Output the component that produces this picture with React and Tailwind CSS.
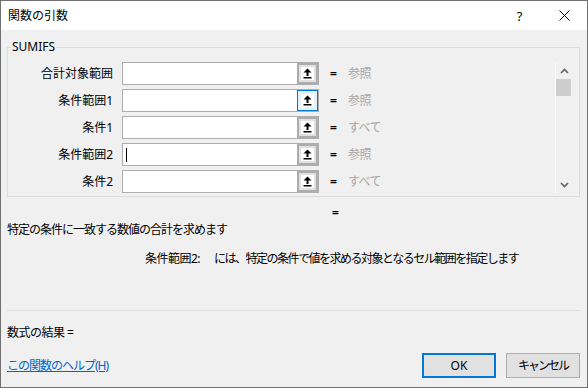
const rows = [
  { label: '合計対象範囲', hint: '参照' },
  { label: '条件範囲1', hint: '参照', focused: true },
  { label: '条件1', hint: 'すべて' },
  { label: '条件範囲2', hint: '参照', caret: true },
  { label: '条件2', hint: 'すべて' },
];

function CollapseIcon() {
  return (
    <svg width="9" height="11" viewBox="0 0 9 11" className="block">
      <polygon points="4.5,0.5 8.5,4.5 0.5,4.5" fill="#000" />
      <rect x="3.5" y="4" width="2" height="4" fill="#000" />
      <rect x="0.5" y="9" width="8" height="1.5" fill="#000" />
    </svg>
  );
}

function RefButton({ focused }) {
  return (
    <div
      className={
        focused
          ? 'w-[21px] h-full flex items-center justify-center border border-[#0078d7] bg-[#e5f1fb]'
          : 'w-[21px] h-full flex items-center justify-center border-2 border-[#adadad] bg-[#e1e1e1]'
      }
    >
      <span className="w-[13px] h-[13px] bg-white flex items-center justify-center">
        <CollapseIcon />
      </span>
    </div>
  );
}

function ArgRow({ label, hint, focused, caret }) {
  return (
    <div className="flex items-center h-[23px]">
      <div className="w-[105px] text-right">{label}</div>
      <div className="ml-[9px] w-[197px] h-full flex border border-[#adadad] bg-white">
        <div className="flex-1 flex items-center pl-[3px]">
          {caret && <span className="w-[1px] h-[14px] bg-black" />}
        </div>
        <RefButton focused={focused} />
      </div>
      <span className="ml-[11px] font-bold">=</span>
      <span className="ml-[11px] text-[#a6a6a6] tracking-[-0.5px]">{hint}</span>
    </div>
  );
}

function Chevron({ down }) {
  return (
    <svg width="9" height="6" viewBox="0 0 9 6">
      <polyline
        points={down ? '1,1 4.5,4.5 8,1' : '1,5 4.5,1.5 8,5'}
        fill="none"
        stroke="#606060"
        strokeWidth="1.6"
      />
    </svg>
  );
}

export default function App() {
  return (
    <div className="w-[588px] h-[388px] bg-[#f0f0f0] border border-[#707070] flex flex-col overflow-hidden text-[12px] leading-[16px] text-black font-['Noto_Sans','Noto_Sans_CJK_JP',sans-serif]">
      {/* title bar */}
      <div className="h-[29px] bg-white flex items-center shrink-0">
        <span className="pl-[7px] flex-1">関数の引数</span>
        <div className="w-[46px] h-full flex items-center justify-center text-[13px] pl-[3px]">?</div>
        <div className="w-[46px] h-full flex items-center justify-center">
          <svg width="11" height="11" viewBox="0 0 11 11">
            <path d="M0.5 0.5 L10.5 10.5 M10.5 0.5 L0.5 10.5" stroke="#000" strokeWidth="1" />
          </svg>
        </div>
      </div>

      <div className="flex-1 flex flex-col pl-[6px] pr-[7px]">
        <fieldset className="mt-[9px] border border-[#dcdcdc] pt-[7px] pb-[3px] pr-[7px]">
          <legend className="ml-[3px] px-[1px]">SUMIFS</legend>
          <div className="flex">
            <div className="flex-1 flex flex-col gap-[4px]">
              {rows.map((r) => (
                <ArgRow key={r.label} {...r} />
              ))}
            </div>
            <div className="w-[17px] border-l border-white flex flex-col">
              <div className="h-[17px] flex items-center justify-center">
                <Chevron />
              </div>
              <div className="w-[15px] h-[17px] bg-[#cdcdcd]" />
              <div className="flex-1" />
              <div className="h-[17px] flex items-center justify-center">
                <Chevron down />
              </div>
            </div>
          </div>
        </fieldset>

        <div className="mt-[8px] ml-[325px] font-bold">=</div>
        <div className="mt-[1px] tracking-[-1px]">特定の条件に一致する数値の合計を求めます</div>
        <div className="mt-[13px] ml-[138px] flex">
          <span className="tracking-[-0.5px]">条件範囲2:</span>
          <span className="ml-[14px] tracking-[-1.5px]">には、特定の条件で値を求める対象となるセル範囲を指定します</span>
        </div>

        <div className="mt-[43px] border-t border-[#dfdfdf]" />
        <div className="mt-[14px] tracking-[-0.5px]">数式の結果 =</div>

        <div className="mt-[12px] flex items-center">
          <div className="flex-1">
            <a href="#" className="text-[#0066cc] underline tracking-[-1px]">この関数のヘルプ(H)</a>
          </div>
          <button className="w-[74px] h-[25px] bg-[#e1e1e1] border-2 border-[#0078d7]">OK</button>
          <button className="ml-[10px] w-[74px] h-[25px] bg-[#e1e1e1] border border-[#adadad] tracking-[-2px]">キャンセル</button>
        </div>
      </div>
    </div>
  );
}
